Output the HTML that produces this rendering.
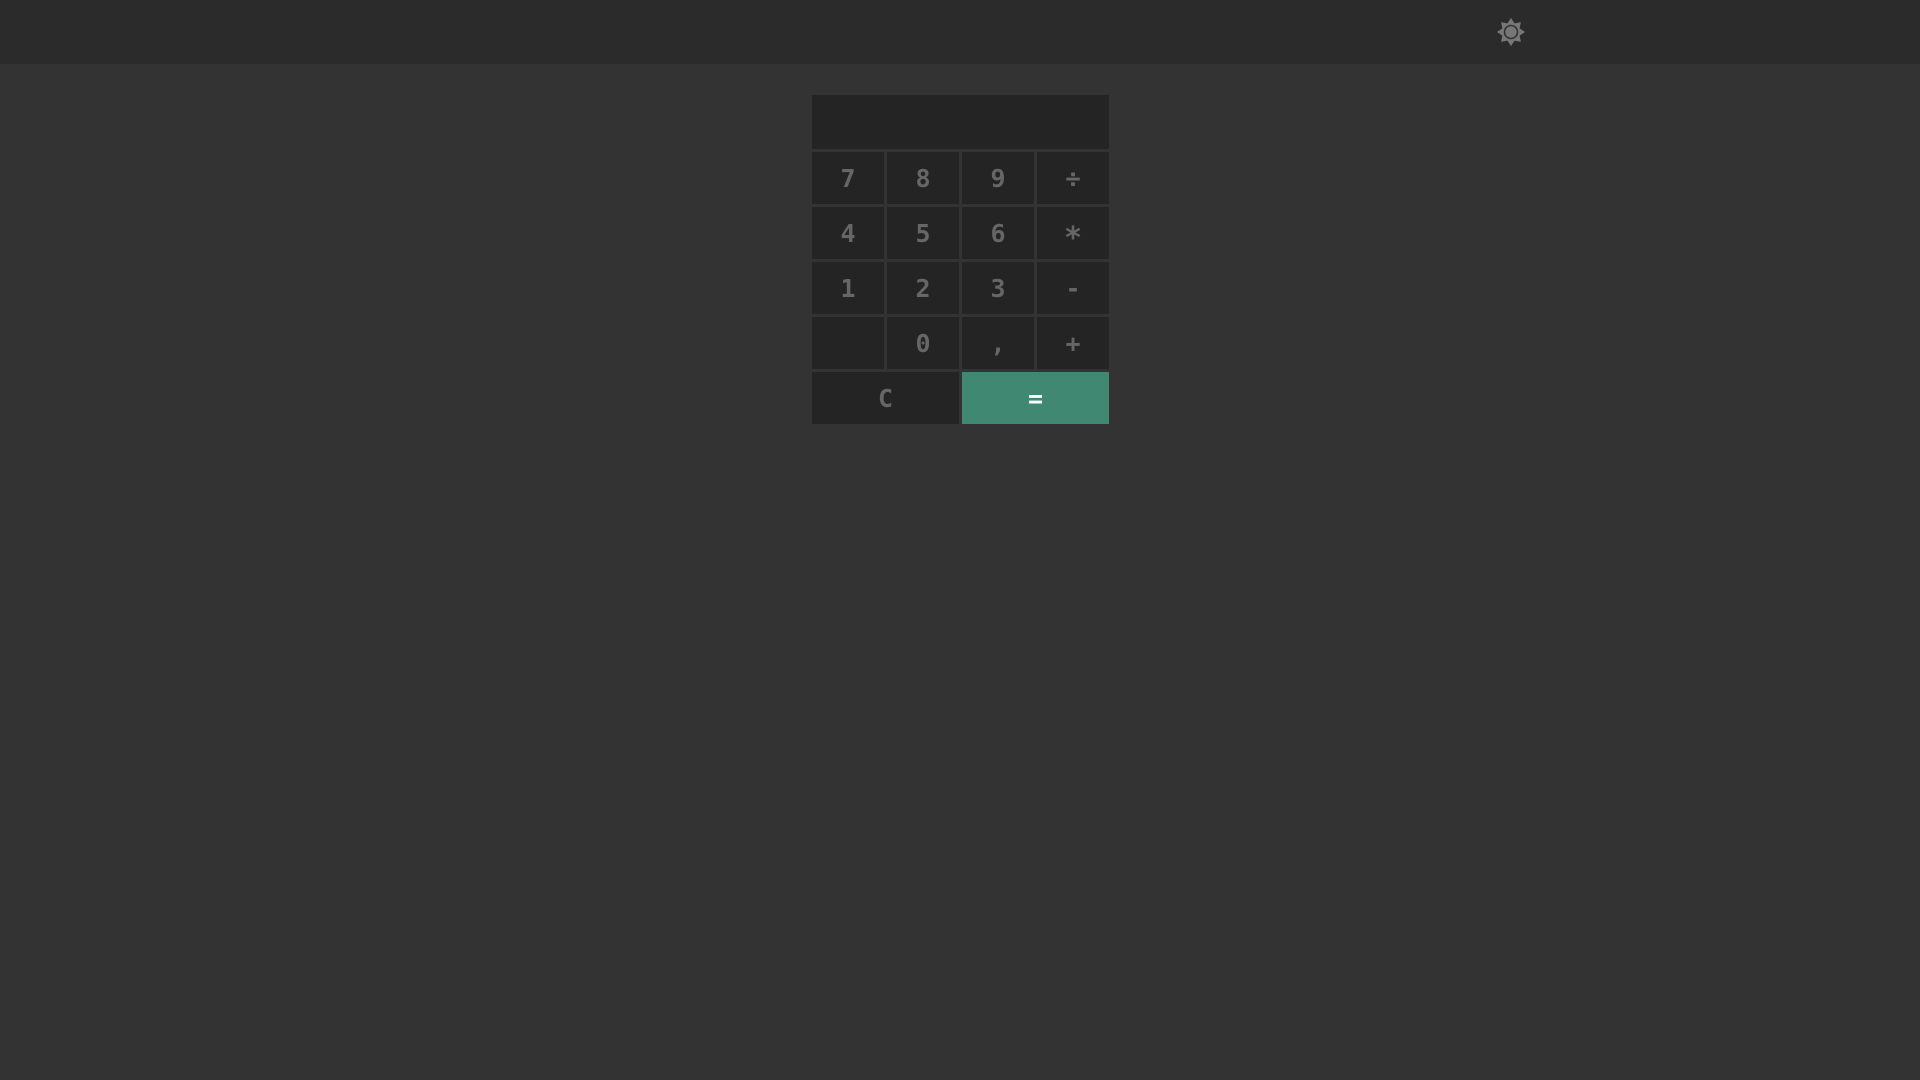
<!DOCTYPE html>
<html><head><style>
html,body{margin:0;padding:0;width:1920px;height:1080px;background:#333;overflow:hidden}
.hdr{position:absolute;left:0;top:0;width:1920px;height:64px;background:#2b2b2b}
.gear{position:absolute;left:1496px;top:17px}
.cell{position:absolute;background:#242424;color:#666;font:bold 25px "DejaVu Sans Mono","Liberation Mono",monospace;display:flex;align-items:center;justify-content:center}
</style></head><body>
<div class="hdr"></div>
<svg class="gear" width="30" height="30" viewBox="-15 -15 30 30">
<polygon fill="#777" points="0,-14 3.6,-8.6 9.9,-9.9 8.6,-3.6 14,0 8.6,3.6 9.9,9.9 3.6,8.6 0,14 -3.6,8.6 -9.9,9.9 -8.6,3.6 -14,0 -8.6,-3.6 -9.9,-9.9 -3.6,-8.6"/>
<circle r="6.5" fill="#777" stroke="#333" stroke-width="1.6"/>
</svg>
<div class="cell" style="left:812px;top:95px;width:297px;height:54px"></div>
<div class="cell" style="left:812px;top:152px;width:72px;height:52px">7</div>
<div class="cell" style="left:887px;top:152px;width:72px;height:52px">8</div>
<div class="cell" style="left:962px;top:152px;width:72px;height:52px">9</div>
<div class="cell" style="left:1037px;top:152px;width:72px;height:52px">÷</div>
<div class="cell" style="left:812px;top:207px;width:72px;height:52px">4</div>
<div class="cell" style="left:887px;top:207px;width:72px;height:52px">5</div>
<div class="cell" style="left:962px;top:207px;width:72px;height:52px">6</div>
<div class="cell" style="left:1037px;top:207px;width:72px;height:52px"><span style="position:relative;top:5px;font-size:30px">*</span></div>
<div class="cell" style="left:812px;top:262px;width:72px;height:52px">1</div>
<div class="cell" style="left:887px;top:262px;width:72px;height:52px">2</div>
<div class="cell" style="left:962px;top:262px;width:72px;height:52px">3</div>
<div class="cell" style="left:1037px;top:262px;width:72px;height:52px">-</div>
<div class="cell" style="left:812px;top:317px;width:72px;height:52px"></div>
<div class="cell" style="left:887px;top:317px;width:72px;height:52px">0</div>
<div class="cell" style="left:962px;top:317px;width:72px;height:52px">,</div>
<div class="cell" style="left:1037px;top:317px;width:72px;height:52px">+</div>
<div class="cell" style="left:812px;top:372px;width:147px;height:52px">C</div>
<div class="cell" style="left:962px;top:372px;width:147px;height:52px;background:#418873;color:#fff">=</div>
</body></html>
